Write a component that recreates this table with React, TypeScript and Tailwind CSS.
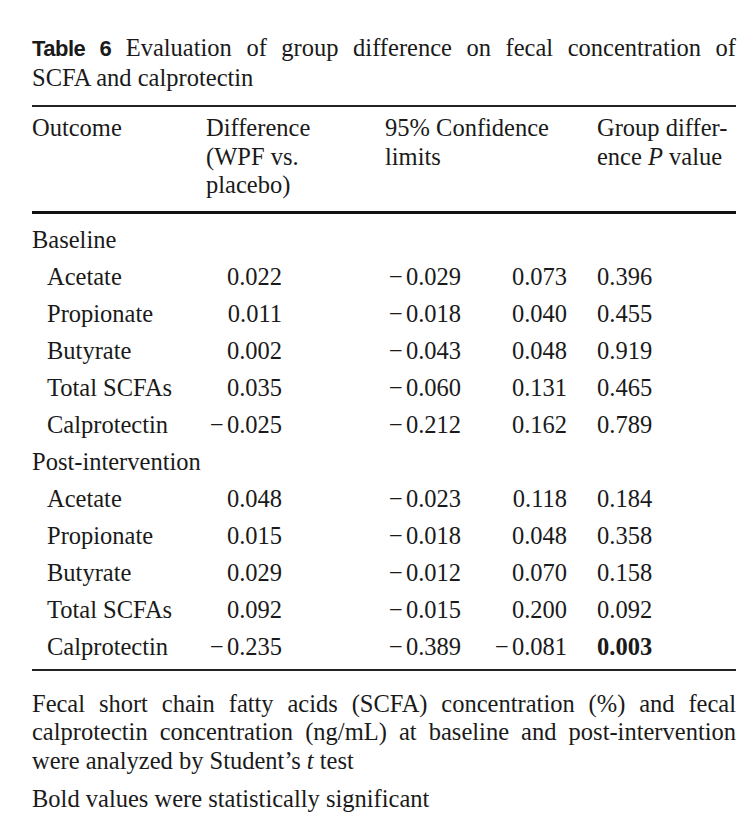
import React from 'react';

type Row = { name: string; diff: string; lo: string; hi: string; p: string; bold?: boolean };

const GROUPS: { label: string; rows: Row[] }[] = [
  {
    label: 'Baseline',
    rows: [
      { name: 'Acetate', diff: '0.022', lo: '-0.029', hi: '0.073', p: '0.396' },
      { name: 'Propionate', diff: '0.011', lo: '-0.018', hi: '0.040', p: '0.455' },
      { name: 'Butyrate', diff: '0.002', lo: '-0.043', hi: '0.048', p: '0.919' },
      { name: 'Total SCFAs', diff: '0.035', lo: '-0.060', hi: '0.131', p: '0.465' },
      { name: 'Calprotectin', diff: '-0.025', lo: '-0.212', hi: '0.162', p: '0.789' },
    ],
  },
  {
    label: 'Post-intervention',
    rows: [
      { name: 'Acetate', diff: '0.048', lo: '-0.023', hi: '0.118', p: '0.184' },
      { name: 'Propionate', diff: '0.015', lo: '-0.018', hi: '0.048', p: '0.358' },
      { name: 'Butyrate', diff: '0.029', lo: '-0.012', hi: '0.070', p: '0.158' },
      { name: 'Total SCFAs', diff: '0.092', lo: '-0.015', hi: '0.200', p: '0.092' },
      { name: 'Calprotectin', diff: '-0.235', lo: '-0.389', hi: '-0.081', p: '0.003', bold: true },
    ],
  },
];

// renders a value with a typographic minus sign
const Num = ({ v }: { v: string }) =>
  v.startsWith('-') ? (
    <>
      <span className="mr-[3px]">−</span>
      {v.slice(1)}
    </>
  ) : (
    <>{v}</>
  );

const COLS = 'grid grid-cols-[174px_179px_106px_106px_1fr]';

export default function App() {
  return (
    <div className="min-h-screen bg-white text-[#1a1a1a]" style={{ fontFamily: '"Liberation Serif", "Times New Roman", serif' }}>
      <div className="ml-[32px] w-[704px] pt-[33px] text-[24.5px]">
        {/* caption */}
        <div className="leading-[29px]">
          <div className="text-justify [text-align-last:justify]">
            <span className="font-bold text-[22px] tracking-[-0.5px]" style={{ fontFamily: '"Liberation Sans", Arial, sans-serif' }}>
              Table 6
            </span>{' '}
            Evaluation of group difference on fecal concentration of
          </div>
          <div>SCFA and calprotectin</div>
        </div>

        <div className="mt-[13px] h-[2px] bg-[#222]" />

        {/* header */}
        <div className={`${COLS} pt-[7px] pb-[11px] leading-[28.5px]`}>
          <div>Outcome</div>
          <div>
            Difference
            <br />
            (WPF vs.
            <br />
            placebo)
          </div>
          <div className="col-span-2">
            95% Confidence
            <br />
            limits
          </div>
          <div>
            Group differ-
            <br />
            ence <i>P</i> value
          </div>
        </div>

        <div className="h-[3px] bg-[#111]" />

        {/* body */}
        <div className="pt-[7px] leading-[37px]">
          {GROUPS.map((g) => (
            <div key={g.label}>
              <div>{g.label}</div>
              {g.rows.map((r) => (
                <div key={g.label + r.name} className={COLS}>
                  <div className="pl-[15px]">{r.name}</div>
                  <div className="w-[76px] text-right">
                    <Num v={r.diff} />
                  </div>
                  <div className="w-[76px] text-right">
                    <Num v={r.lo} />
                  </div>
                  <div className="pr-[30px] text-right">
                    <Num v={r.hi} />
                  </div>
                  <div className={r.bold ? 'font-bold' : ''}>{r.p}</div>
                </div>
              ))}
            </div>
          ))}
        </div>

        <div className="mt-[4px] h-[2px] bg-[#222]" />

        {/* footnotes */}
        <div className="mt-[19px] leading-[28.5px]">
          <div className="text-justify [text-align-last:justify]">
            Fecal short chain fatty acids (SCFA) concentration (%) and fecal
          </div>
          <div className="text-justify [text-align-last:justify]">
            calprotectin concentration (ng/mL) at baseline and post-intervention
          </div>
          <div>
            were analyzed by Student’s <i>t</i> test
          </div>
          <div className="mt-[10px]">Bold values were statistically significant</div>
        </div>
      </div>
    </div>
  );
}
